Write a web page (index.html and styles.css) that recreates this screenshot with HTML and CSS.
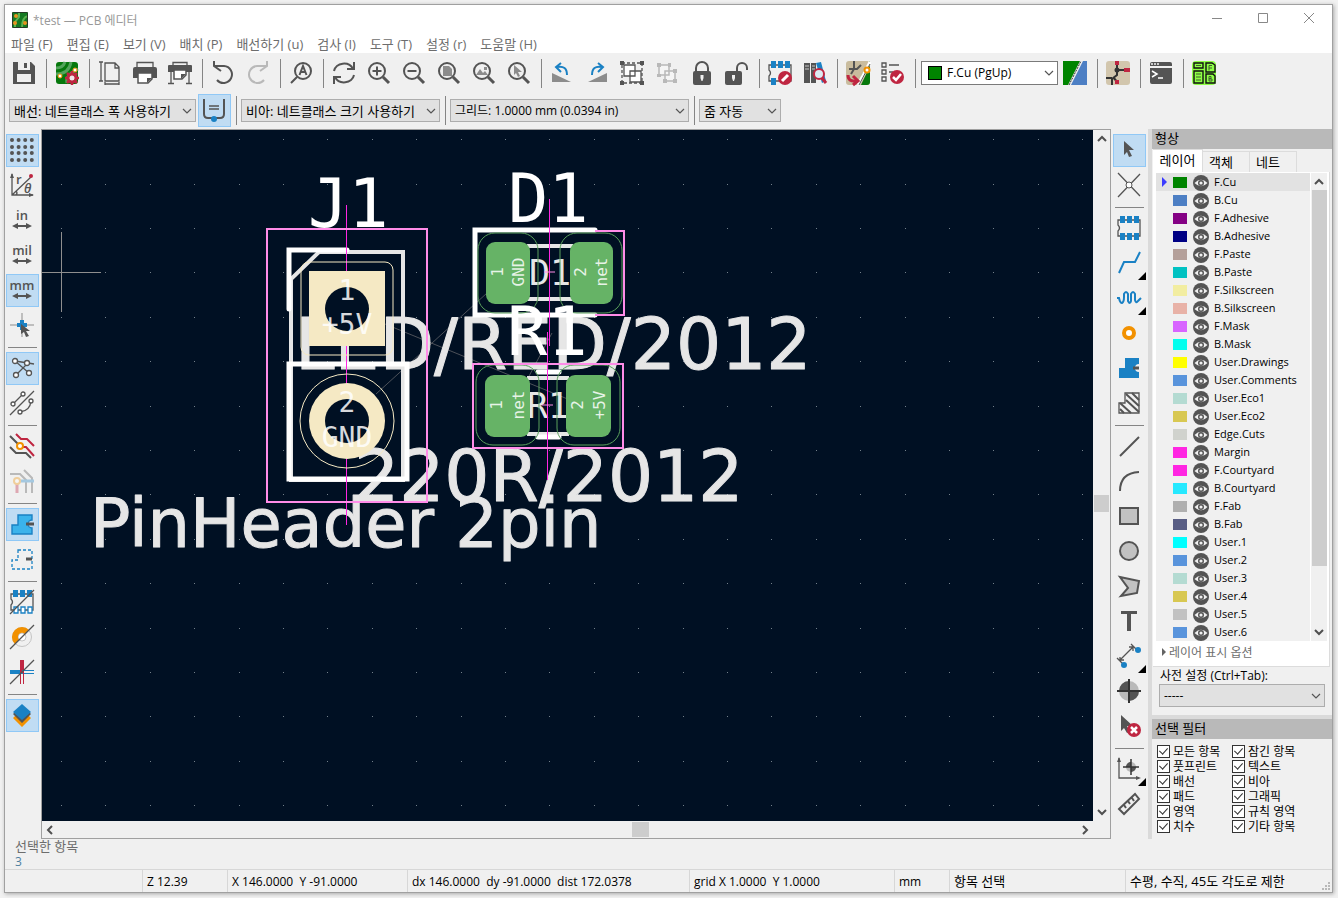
FILE: index.html
```html
<!DOCTYPE html>
<html lang="ko">
<head>
  <meta charset="UTF-8">
  <meta name="viewport" content="width=device-width, initial-scale=1.0">
  <title>*test — PCB 에디터</title>
  <link rel="stylesheet" href="styles.css">
</head>
<body>
  <!-- shared symbols -->
  <svg class="defs" aria-hidden="true">
    <symbol id="chevron" viewBox="0 0 10 6"><path d="M1 1l4 4 4-4" fill="none" stroke="#555" stroke-width="1.2"/></symbol>
    <symbol id="arrow" viewBox="0 0 10 8"><path d="M1 6l4-4 4 4" fill="none" stroke="#505050" stroke-width="2"/></symbol>
    <symbol id="eye" viewBox="0 0 16 16">
      <circle cx="8" cy="8" r="8" fill="#545454"/>
      <path d="M1.500 8Q8 1.500 14.500 8Q8 14.500 1.500 8z" fill="#f0f0f0"/>
      <circle cx="8" cy="8" r="2.300" fill="#f0f0f0" stroke="#545454" stroke-width="1.400"/>
    </symbol>
    <symbol id="lens" viewBox="0 0 24 24"><circle cx="10" cy="10" r="8" fill="none" stroke="#545454" stroke-width="2"/><path d="M16 16l6 6" stroke="#545454" stroke-width="3"/></symbol>
    <symbol id="chip" viewBox="0 0 24 24">
      <path d="M1 4h22v16H1v-5q3-3 0-6z" fill="none" stroke="#545454" stroke-width="1.300"/>
    </symbol>
    <symbol id="measure" viewBox="0 0 24 24"><path d="M4 18h16" stroke="#545454" stroke-width="2"/><path d="M2 18l6-3v6zM22 18l-6-3v6z" fill="#545454"/></symbol>
  </svg>

  <div class="window">
    <header class="titlebar">
      <svg class="app-icon" viewBox="0 0 16 16"><rect width="16" height="16" rx="1" fill="#157a22"/><path d="M7 0v5l-4 5v6M16 4q-6 1-6 12" fill="none" stroke="#5db34f" stroke-width="2"/><circle cx="4" cy="4" r="2" fill="#e5941e"/><circle cx="3" cy="11" r="2" fill="#e5941e"/><circle cx="13" cy="11" r="2" fill="#e5941e"/><rect x=".5" y=".5" width="15" height="15" rx="1" fill="none" stroke="#253b25"/></svg>
      <h1>*test — PCB 에디터</h1>
      <div class="window-buttons">
        <button aria-label="최소화"><svg viewBox="0 0 12 12"><path d="M1 6.500h10"/></svg></button>
        <button aria-label="최대화"><svg viewBox="0 0 12 12"><path d="M1.500 1.500h9v9h-9z"/></svg></button>
        <button aria-label="닫기"><svg viewBox="0 0 12 12"><path d="M1 1l10 10M11 1L1 11"/></svg></button>
      </div>
    </header>

    <nav class="menubar">
      <a href="#">파일 (F)</a>
      <a href="#">편집 (E)</a>
      <a href="#">보기 (V)</a>
      <a href="#">배치 (P)</a>
      <a href="#">배선하기 (u)</a>
      <a href="#">검사 (I)</a>
      <a href="#">도구 (T)</a>
      <a href="#">설정 (r)</a>
      <a href="#">도움말 (H)</a>
    </nav>

    <div class="toolbar">
      <button class="tool" aria-label="저장"><svg viewBox="0 0 24 24"><path class="dark" d="M1 1h18l4 4v18H1z"/><path fill="#f0f0f0" d="M6 1h12v8H6zM5 13h14v8H5z"/><path class="dark" d="M12 2h3v5h-3z"/></svg></button>
      <span class="sep"></span>
      <button class="tool" aria-label="보드 설정"><svg viewBox="0 0 24 24"><rect x="1" y="1" width="22" height="22" rx="3" fill="#06780c"/><path d="M1 7q7 0 9-6M1 13q13 0 15-12M12 22q-2-8 11-14" fill="none" stroke="#53a35b" stroke-width="3"/><circle cx="20" cy="9" r="2" fill="#fff" stroke="#f29100"/><circle cx="5" cy="15" r="2" fill="#fff" stroke="#f29100"/><circle cx="17" cy="17" r="4" fill="#efe6e8" stroke="#bf2641" stroke-width="3"/><path d="M17 10v4M17 20v4M10 17h4M20 17h4M12 12l3 3M19 19l3 3M22 12l-3 3M12 22l3-3" stroke="#bf2641" stroke-width="2.500"/></svg></button>
      <span class="sep"></span>
      <button class="tool" aria-label="페이지 설정"><svg viewBox="0 0 24 24"><path d="M7 2h10l4 4v14H7zM17 2v5h4M3 1v19M1 1h4M1 20h4M7 23h14M7 21v3M21 21v3" class="line"/></svg></button>
      <button class="tool" aria-label="인쇄"><svg viewBox="0 0 24 24"><path class="line" d="M4 6V1.500h16V6"/><path class="dark" d="M2 6h20q2 0 2 2v9H0V8q0-2 2-2z"/><path fill="#fff" stroke="#545454" stroke-width="1.500" d="M5 12h14v6l-4 4H5z"/><path class="dark" d="M14 17h5l-5 5z"/></svg></button>
      <button class="tool" aria-label="플롯"><svg viewBox="0 0 24 24"><path class="line" d="M5 4V1.500h14V4M3 10v12M0 22.500h6M21 10v12M18 22.500h6"/><path class="dark" d="M1 4h22q1 0 1 1v6H0V5q0-1 1-1z"/><path fill="#fff" stroke="#545454" stroke-width="1.500" d="M6 9h12v5l-4 4H6z"/><path class="dark" d="M13 13h5l-5 5z"/></svg></button>
      <span class="sep"></span>
      <button class="tool" aria-label="실행 취소"><svg viewBox="0 0 24 24"><path class="bold" d="M3 5h10a8.500 8.500 0 1 1-7 14M10 10L3 5V0"/></svg></button>
      <button class="tool faded" aria-label="다시 실행"><svg viewBox="0 0 24 24"><path class="bold" d="M21 5H11a8.500 8.500 0 1 0 7 14M14 10l7-5V0"/></svg></button>
      <span class="sep"></span>
      <button class="tool" aria-label="찾기"><svg viewBox="0 0 24 24"><circle class="bold" cx="14" cy="10" r="8"/><path class="bold" d="M8 16l-6 6M10.500 14l3.500-9 3.500 9M12 11h4"/></svg></button>
      <span class="sep"></span>
      <button class="tool" aria-label="새로 고침"><svg viewBox="0 0 24 24"><path class="bold" d="M2 10a10 9 0 0 1 19-2M22 14a10 9 0 0 1-19 2M22 1v7h-7M2 23v-7h7"/></svg></button>
      <button class="tool" aria-label="확대"><svg viewBox="0 0 24 24"><use href="#lens"/><path class="bold" d="M5.500 10h9M10 5.500v9"/></svg></button>
      <button class="tool" aria-label="축소"><svg viewBox="0 0 24 24"><use href="#lens"/><path class="bold" d="M5.500 10h9"/></svg></button>
      <button class="tool" aria-label="페이지 맞춤"><svg viewBox="0 0 24 24"><use href="#lens"/><path fill="#8c8c8c" d="M6 5h6l3 3v7H6z"/></svg></button>
      <button class="tool" aria-label="객체 맞춤"><svg viewBox="0 0 24 24"><use href="#lens"/><path fill="#8c8c8c" d="M4 14l4-6 3 4 2-2 3 4zM12 6h3v3h-3z"/></svg></button>
      <button class="tool" aria-label="선택 확대"><svg viewBox="0 0 24 24"><use href="#lens"/><path fill="#8c8c8c" d="M7 4l8 7h-4l2 4-2 1-2-4-2 2z"/></svg></button>
      <span class="sep"></span>
      <button class="tool" aria-label="반시계 방향 회전"><svg viewBox="0 0 24 24"><path fill="#8c8c8c" d="M2 12l19 9H2z"/><path class="blue-line" d="M7 6q10-2 10 8M11 2L6 6l5 5"/></svg></button>
      <button class="tool" aria-label="시계 방향 회전"><svg viewBox="0 0 24 24"><path fill="#8c8c8c" d="M22 12L3 21h19z"/><path class="blue-line" d="M17 6q-10-2-10 8M13 2l5 4-5 5"/></svg></button>
      <button class="tool" aria-label="그룹"><svg viewBox="0 0 24 24"><path class="line" stroke-dasharray="3 2" d="M2 2h20v20H2z"/><path fill="#fff" stroke="#545454" stroke-width="1.300" d="M4 4h11v11H4zM10 10h11v11H10z"/><path class="dark" d="M0 0h4v4H0zM20 0h4v4h-4zM0 20h4v4H0zM20 20h4v4h-4z"/></svg></button>
      <button class="tool faded" aria-label="그룹 해제"><svg viewBox="0 0 24 24"><path fill="#fff" stroke="#545454" stroke-width="1.500" d="M4 4h10v10H4zM10 10h10v10H10z"/><path class="dark" d="M2 2h4v4H2zM13 2h3v4h-3zM2 13h4v3H2zM18 8h4v4h-4zM8 18h4v4H8zM18 18h4v4h-4z"/></svg></button>
      <button class="tool" aria-label="잠금"><svg viewBox="0 0 24 24"><path class="bold" d="M6 11V7a6 6 0 0 1 12 0v4"/><rect class="dark" x="3" y="10" width="18" height="14" rx="2"/><path fill="#f0f0f0" d="M10.500 14h3v3l-1 3h-1l-1-3z"/></svg></button>
      <button class="tool" aria-label="잠금 해제"><svg viewBox="0 0 24 24"><path class="bold" d="M12 11V7a5 5 0 0 1 10 0v2"/><rect class="dark" x="0" y="10" width="17" height="14" rx="2"/><path fill="#f0f0f0" d="M7 14h3v3l-1 3H8l-1-3z"/></svg></button>
      <span class="sep"></span>
      <button class="tool" aria-label="풋프린트 편집기"><svg viewBox="0 0 24 24"><use href="#chip"/><path class="blue" d="M3 0h5v7H3zM10 0h5v7h-5zM17 0h5v7h-5zM3 17h5v7H3z"/><circle cx="17" cy="17" r="7" class="red"/><path stroke="#fff" stroke-width="3" d="M14 20l6-6"/></svg></button>
      <button class="tool" aria-label="풋프린트 라이브러리"><svg viewBox="0 0 24 24"><path class="dark" d="M1 2h6v20H1zM8 2h5v20H8z"/><path class="blue" d="M13 2l5-1 5 19-4 2z"/><path stroke="#c8c8c8" d="M2 5h4M2 8h4M9 5h3M9 8h3"/><circle cx="16" cy="13" r="5" fill="#dceaf2" stroke="#bf2641" stroke-width="2"/><path stroke="#bf2641" stroke-width="3" d="M19 17l4 5"/></svg></button>
      <span class="sep"></span>
      <button class="tool" aria-label="회로도에서 PCB 업데이트"><svg viewBox="0 0 24 24"><rect width="24" height="24" rx="3" fill="#c9bc9e"/><path fill="#06780c" d="M15 24L24 5v16q0 3-3 3zM15 15l9-15v10z"/><path d="M12 24L24 1" stroke="#fff" stroke-width="3"/><path d="M13 24L24 3" stroke="#545454"/><path class="bold" d="M8 0v8M3 8h8l4-4M8 8L5 13"/><circle cx="21" cy="9" r="2.500" fill="#fff" stroke="#f29100" stroke-width="2"/><path d="M2 14q0 7 8 6M7 15l5 5-5 4" stroke="#bf2641" stroke-width="3" fill="none"/></svg></button>
      <button class="tool" aria-label="디자인 규칙 검사"><svg viewBox="0 0 24 24"><path class="line" d="M1 2h4v4H1zM1 9h4v4H1zM1 16h4v4H1zM8 4h10M8 11h4"/><circle class="red" cx="16" cy="16" r="7"/><path fill="none" stroke="#fff" stroke-width="2.500" d="M12 16l3 3 5-6"/></svg></button>
      <span class="sep"></span>
      <label class="combo combo-layer">
        <span class="combo-swatch"></span>
        <select aria-label="활성 레이어"><option>F.Cu (PgUp)</option></select>
        <svg><use href="#chevron"/></svg>
      </label>
      <button class="tool" aria-label="레이어 쌍"><svg viewBox="0 0 24 24"><path fill="#008400" d="M0 0h17L5 24H0z"/><path fill="#4d7fc4" d="M20 0h4v24H8z"/><path d="M6 24L18 0" stroke="#333" stroke-dasharray="2 1"/></svg></button>
      <span class="sep"></span>
      <button class="tool" aria-label="회로도 편집기"><svg viewBox="0 0 24 24"><rect width="24" height="24" rx="3" fill="#d2c6ad"/><path d="M11 4v10L6 18v6M11 9h8M0 17h6M7 16l5 6" stroke="#333" stroke-width="2" fill="none"/><circle cx="11" cy="9" r="2.500" fill="#333"/><path class="red" d="M9 0h4v4H9zM18 7h6v4h-6zM9 19h4v4H9z"/></svg></button>
      <span class="sep"></span>
      <button class="tool" aria-label="스크립트 콘솔"><svg viewBox="0 0 24 24"><path class="dark" d="M1 3q0-2 2-2h18q2 0 2 2v2H1zM1 7h22v14q0 2-2 2H3q-2 0-2-2z"/><path d="M2 3h8" stroke="#f0f0f0" stroke-width="1.500" stroke-dasharray="2 1"/><path d="M3 10l5 3-5 3M9 17h5" fill="none" stroke="#fff" stroke-width="1.500"/></svg></button>
      <span class="sep"></span>
      <button class="tool" aria-label="보드 통계"><svg viewBox="0 0 24 24"><rect width="24" height="24" rx="4" fill="#8eff45"/><path d="M2 2h9v5H2zM2 10h9v12H2zM14 2h6l3 2v7h-9zM14 13h7l2 2v7h-9z" fill="none" stroke="#111" stroke-width="1.400"/><path d="M4 4.500h5M4 13h5M4 16h5M4 19h5M17 9.500V4.500h3M17 7h3M17 15.500v4.500M17 15.500h2v2h-2M17 20h3v-2h-3" fill="none" stroke="#3f5f30"/></svg></button>
    </div>

    <div class="toolbar toolbar-options">
      <label class="combo combo-track"><select aria-label="배선 폭"><option>배선: 네트클래스 폭 사용하기</option></select><svg><use href="#chevron"/></svg></label>
      <button class="tool active" aria-label="자동 배선 폭"><svg viewBox="0 0 24 24"><path class="bold" d="M2 1v15q0 4 4 4h12q4 0 4-4V1"/><path class="line" d="M7 8h10M7 11h10"/><circle class="blue" cx="12" cy="21" r="3"/></svg></button>
      <span class="sep"></span>
      <label class="combo combo-via"><select aria-label="비아 크기"><option>비아: 네트클래스 크기 사용하기</option></select><svg><use href="#chevron"/></svg></label>
      <span class="sep"></span>
      <label class="combo combo-grid"><select aria-label="그리드"><option>그리드: 1.0000 mm (0.0394 in)</option></select><svg><use href="#chevron"/></svg></label>
      <span class="sep"></span>
      <label class="combo combo-zoom"><select aria-label="줌"><option>줌 자동</option></select><svg><use href="#chevron"/></svg></label>
    </div>

    <main class="workspace">
      <div class="side-tools">
        <button class="tool active" aria-label="그리드 표시"><svg viewBox="0 0 24 24"><path d="M2 2h20M2 9h20M2 15h20M2 22h20" stroke="#545454" stroke-width="4" stroke-linecap="round" stroke-dasharray="0 6.600"/></svg></button>
        <button class="tool" aria-label="극좌표"><svg viewBox="0 0 24 24"><path class="line" d="M2 1v21h21M2 22L21 4M6 22q2-2 0-4"/><path class="dark" d="M0 5l2-5 2 5zM19 20l5 2-5 2z"/><circle class="red" cx="21" cy="3" r="2"/><text x="6" y="11">r</text><text class="theta" x="14" y="20">θ</text></svg></button>
        <button class="tool" aria-label="인치"><svg viewBox="0 0 24 24"><use href="#measure"/><text x="12" y="12" text-anchor="middle">in</text></svg></button>
        <button class="tool" aria-label="밀"><svg viewBox="0 0 24 24"><use href="#measure"/><text x="12" y="12" text-anchor="middle">mil</text></svg></button>
        <button class="tool active" aria-label="밀리미터"><svg viewBox="0 0 24 24"><use href="#measure"/><text x="12" y="12" text-anchor="middle">mm</text></svg></button>
        <button class="tool" aria-label="전체 십자선"><svg viewBox="0 0 24 24"><path stroke="#8c8c8c" d="M0 12h24M12 0v24"/><path d="M7 12h10M12 7v10" stroke="#1a81c4" stroke-width="4"/><path class="dark" d="M11 11l9 7h-4l3 5-3 1-2-5-3 2z"/></svg></button>
        <span class="sep"></span>
        <button class="tool active" aria-label="랫츠네스트"><svg viewBox="0 0 24 24"><path class="line" d="M5 5l13 2 6 1M5 5l14 12M18 7L6 19"/><g fill="#fff" stroke="#545454" stroke-width="1.300"><circle cx="5" cy="5" r="2.500"/><circle cx="17" cy="7" r="2.500"/><circle cx="19" cy="17" r="2.500"/><circle cx="6" cy="19" r="2.500"/></g></svg></button>
        <button class="tool" aria-label="곡선 랫츠네스트"><svg viewBox="0 0 24 24"><path class="line" d="M0 24L24 0M3 13L13 3M10 21q10-1 11-11"/><g fill="#fff" stroke="#545454" stroke-width="1.300"><circle cx="3" cy="13" r="2"/><circle cx="13" cy="3" r="2"/><circle cx="10" cy="21" r="2"/><circle cx="21" cy="10" r="2"/></g></svg></button>
        <span class="sep"></span>
        <button class="tool" aria-label="고대비 표시"><svg viewBox="0 0 24 24"><path class="bold" d="M0 2l9 9M0 13l6 6h10l5 5"/><path d="M6 0l5 5h6l7 7M12 13h4l8 9" fill="none" stroke="#bf2641" stroke-width="2"/><circle cx="10" cy="12" r="3" fill="#fff" stroke="#f29100" stroke-width="2"/></svg></button>
        <button class="tool faded" aria-label="네트 강조"><svg viewBox="0 0 24 24"><path class="bold" d="M0 5h10l6 6v13M14 1l8 8v15"/><path d="M7 12h17" stroke="#1a81c4" stroke-width="3"/><path d="M7 13v11" stroke="#bf2641" stroke-width="3"/><circle cx="7" cy="12" r="3" fill="#fff" stroke="#f29100" stroke-width="2"/></svg></button>
        <span class="sep"></span>
        <button class="tool active" aria-label="영역 채우기"><svg viewBox="0 0 24 24"><path d="M8 3h14v5a4 4 0 1 0 0 8v6H2V13h6z" fill="#3bb3eb" stroke="#1a81c4" stroke-width="1.400"/><path d="M16 12h8" stroke="#545454" stroke-width="3"/></svg></button>
        <button class="tool" aria-label="영역 외곽선"><svg viewBox="0 0 24 24"><path d="M8 3h14v19H2V13h6z" fill="none" stroke="#1a81c4" stroke-width="1.300" stroke-dasharray="3 2"/><path d="M16 12h6" stroke="#545454" stroke-width="3"/></svg></button>
        <span class="sep"></span>
        <button class="tool" aria-label="패드 외곽선"><svg viewBox="0 0 24 24"><use href="#chip"/><path class="blue" d="M3 0h5v7H3zM10 0h5v7h-5zM17 0h5v7h-5z"/><path fill="#fff" stroke="#1a81c4" stroke-width="1.300" d="M4 17h4v6H4zM11 17h4v6h-4zM18 17h4v6h-4z"/><path class="line" d="M0 24L24 0"/></svg></button>
        <button class="tool" aria-label="비아 외곽선"><svg viewBox="0 0 24 24"><circle cx="12" cy="12" r="9.500" fill="none" stroke="#c4c4c4"/><circle cx="12" cy="12" r="4" fill="#fff" stroke="#c4c4c4"/><path d="M7 17A7 7 0 0 1 17 7" fill="none" stroke="#f29100" stroke-width="6"/><path class="line" d="M0 24L24 0"/></svg></button>
        <button class="tool" aria-label="배선 외곽선"><svg viewBox="0 0 24 24"><path stroke="#1a81c4" stroke-width="4" d="M0 12h12"/><path stroke="#bf2641" stroke-width="4" d="M12 0v13"/><path stroke="#1a81c4" d="M12 10.500h12M12 13.500h12"/><path stroke="#bf2641" d="M10.500 12v12M13.500 12v12"/><path class="line" d="M0 24L24 0"/></svg></button>
        <span class="sep"></span>
        <button class="tool active" aria-label="형상 관리자"><svg viewBox="0 0 24 24"><path fill="#f29100" d="M12 24l-9-9 3-3 6 5 6-5 3 3z"/><path class="dark" d="M12 20l-9-9 3-3 6 5 6-5 3 3z"/><path class="blue" d="M12 1l9 8-9 8-9-8z"/></svg></button>
      </div>

      <div class="canvas-frame">
        <svg class="board" role="img" aria-label="PCB 보드">
          <defs>
            <g id="dot-row"><rect width="1" height="1"/><rect x="44" width="1" height="1"/><rect x="89" width="1" height="1"/><rect x="133" width="1" height="1"/><rect x="178" width="1" height="1"/></g>
            <pattern id="grid" x="19" y="9" width="222" height="222" patternUnits="userSpaceOnUse" fill="#73808a">
              <use href="#dot-row"/><use href="#dot-row" y="45"/><use href="#dot-row" y="89"/><use href="#dot-row" y="133"/><use href="#dot-row" y="178"/>
            </pattern>
          </defs>
          <rect width="100%" height="100%" fill="url(#grid)"/>
          <g transform="translate(-42 -130)">
            <g class="cursor">
              <rect x="42" y="272" width="59" height="1"/>
              <rect x="61" y="232" width="1" height="80"/>
            </g>
            <path class="ratsnest" d="M385 324L570 400M487 293L376 394M552 333L528 378"/>

            <text class="value" x="295" y="369">LED/RED/2012</text>
            <text class="value" x="354" y="501">220R/2012</text>
            <text class="value value-pin" x="90" y="547">PinHeader 2pin</text>

            <!-- fabrication layer -->
            <path class="fab" d="M319 252h84v228H291V279zM527 246h46M527 299h46M527 378h42M527 434h42"/>
            <text class="fab-ref" x="529" y="285">D1</text>
            <text class="fab-ref" x="527" y="418">R1</text>

            <!-- silkscreen -->
            <path class="silk" d="M347 250h-58v59M289 364h118v115H289zM595 230H475v85h120M538 372h21M538 437h21"/>

            <g class="axis">
              <rect x="346" y="205" width="1" height="320"/>
              <rect x="549" y="199" width="1" height="147"/>
              <rect x="547" y="332" width="1" height="148"/>
            </g>

            <!-- J1 pads -->
            <rect class="pad-tht" x="309" y="271" width="76" height="75"/>
            <circle class="pad-tht" cx="347" cy="421" r="38"/>
            <circle class="hole" cx="347" cy="309" r="22"/>
            <circle class="hole" cx="347" cy="421" r="22"/>
            <rect class="clear-tht" x="301" y="262" width="92" height="93" rx="8"/>
            <circle class="clear-tht" cx="347" cy="421" r="47"/>

            <!-- D1 and R1 pads -->
            <g class="pad-smd">
              <rect x="486" y="242" width="44" height="62" rx="9"/>
              <rect x="570" y="242" width="43" height="62" rx="9"/>
              <rect x="485" y="375" width="45" height="62" rx="9"/>
              <rect x="566" y="375" width="45" height="62" rx="9"/>
            </g>
            <g class="clear-smd">
              <rect x="478" y="233" width="60" height="80" rx="17"/>
              <rect x="560" y="233" width="62" height="80" rx="17"/>
              <rect x="476" y="365" width="63" height="80" rx="17"/>
              <rect x="557" y="365" width="63" height="80" rx="17"/>
            </g>

            <path class="courtyard" d="M267 229h160v273H267zM595 231h29v84h-29M473 364h150v84H473z"/>
            <path class="anchor" d="M544 272h11M542 405h11"/>

            <text class="ref" x="308" y="227">J1</text>
            <text class="ref" x="508" y="222">D1</text>
            <text class="ref" x="507" y="355">R1</text>

            <g class="pad-label">
              <text x="347" y="300">1</text>
              <text x="347" y="334">+5V</text>
              <text x="347" y="412">2</text>
              <text x="347" y="447">GND</text>
            </g>
            <g class="pad-label pad-label-small">
              <text transform="translate(503 272) rotate(-90)">1</text>
              <text transform="translate(524 272) rotate(-90)">GND</text>
              <text transform="translate(586 272) rotate(-90)">2</text>
              <text transform="translate(607 272) rotate(-90)">net</text>
              <text transform="translate(502 405) rotate(-90)">1</text>
              <text transform="translate(524 405) rotate(-90)">net</text>
              <text transform="translate(583 405) rotate(-90)">2</text>
              <text transform="translate(605 405) rotate(-90)">+5V</text>
            </g>
          </g>
        </svg>
        <div class="vscroll"><svg><use href="#arrow"/></svg><span class="thumb"></span><svg class="down"><use href="#arrow"/></svg></div>
        <div class="hscroll"><svg class="left"><use href="#arrow"/></svg><span class="thumb"></span><svg class="right"><use href="#arrow"/></svg></div>
      </div>

      <div class="side-tools side-tools-right">
        <button class="tool active" aria-label="선택"><svg viewBox="0 0 24 24"><path class="dark" d="M7 3l10 9h-5l3 6-3 1-2-5-3 3z"/></svg></button>
        <button class="tool" aria-label="로컬 랫츠네스트"><svg viewBox="0 0 24 24"><path class="line" d="M1 0l22 23M23 1L1 24"/><circle cx="12" cy="12" r="3" fill="#fff" stroke="#545454"/></svg></button>
        <span class="sep"></span>
        <button class="tool" aria-label="풋프린트 추가"><svg viewBox="0 0 24 24"><use href="#chip"/><path class="blue" d="M3 0h5v7H3zM10 0h5v7h-5zM17 0h5v7h-5zM3 17h5v7H3zM10 17h5v7h-5zM17 17h5v7h-5z"/></svg></button>
        <button class="tool more" aria-label="배선"><svg viewBox="0 0 24 24"><path class="blue-line" d="M2 22l5-11h11l5-10"/></svg></button>
        <button class="tool more" aria-label="길이 조정"><svg viewBox="0 0 24 24"><path class="blue-line" d="M0 12h2q1 5 3 5 2-1 2-6V8q2-4 4 0v7q2 4 3 0V8q2-4 4 0v6q1 4 3 1l3-3"/></svg></button>
        <button class="tool" aria-label="비아"><svg viewBox="0 0 24 24"><circle cx="12" cy="12" r="5" fill="#fff" stroke="#f29100" stroke-width="4"/></svg></button>
        <button class="tool" aria-label="채움 영역"><svg viewBox="0 0 24 24"><path class="blue" d="M8 2h14v6a4 4 0 1 0 0 8v6H2V12h6z"/><path d="M16 12h6" stroke="#545454" stroke-width="3"/></svg></button>
        <button class="tool" aria-label="규칙 영역"><svg viewBox="0 0 24 24"><path class="line" d="M8 2h14v20H2V12h6z"/><path d="M9 3l13 12M9 9l13 12M3 12l11 10M3 18l4 4M15 2l7 7" stroke="#545454" stroke-width="2"/></svg></button>
        <span class="sep"></span>
        <button class="tool" aria-label="선"><svg viewBox="0 0 24 24"><path class="bold" d="M3 22L22 3"/></svg></button>
        <button class="tool" aria-label="호"><svg viewBox="0 0 24 24"><path class="bold" d="M3 22Q3 4 22 3"/></svg></button>
        <button class="tool" aria-label="사각형"><svg viewBox="0 0 24 24"><path class="shape" d="M3 4h18v16H3z"/></svg></button>
        <button class="tool" aria-label="원"><svg viewBox="0 0 24 24"><circle class="shape" cx="12" cy="12" r="9"/></svg></button>
        <button class="tool" aria-label="다각형"><svg viewBox="0 0 24 24"><path class="shape" d="M3 3l19 4-2 12-16 3 7-8z"/></svg></button>
        <button class="tool" aria-label="텍스트"><svg viewBox="0 0 24 24"><path class="dark" d="M4 2h16v3h-6v17h-4V5H4z"/></svg></button>
        <button class="tool more" aria-label="치수"><svg viewBox="0 0 24 24"><path class="line" d="M3 16L16 3M3 13v3h4M12 3h4v4M0 14l7 7M14 0l7 7"/><circle class="blue" cx="21" cy="6" r="3"/><circle class="blue" cx="7" cy="21" r="3"/></svg></button>
        <button class="tool" aria-label="층 정렬 표적"><svg viewBox="0 0 24 24"><circle cx="12" cy="12" r="10" fill="#b9b9b9"/><path class="dark" d="M12 12V2A10 10 0 0 0 2 12zM12 12v10a10 10 0 0 0 10-10z"/><path d="M0 12h24M12 0v24" stroke="#333" stroke-width="2"/></svg></button>
        <button class="tool" aria-label="삭제"><svg viewBox="0 0 24 24"><path class="dark" d="M4 1l12 11h-6l3 6-3 1-3-5-3 3z"/><circle class="red" cx="17" cy="16" r="7"/><path d="M14 13l6 6M20 13l-6 6" stroke="#fff" stroke-width="2.500"/></svg></button>
        <span class="sep"></span>
        <button class="tool more" aria-label="원점 설정"><svg viewBox="0 0 24 24"><path class="line" d="M2 1v20h20"/><path class="dark" d="M0 5l2-5 2 5zM19 19l5 2-5 2z"/><circle cx="14" cy="10" r="5" fill="#b9b9b9"/><path class="dark" d="M14 10V5a5 5 0 0 0-5 5zM14 10v5a5 5 0 0 0 5-5z"/><path d="M6 10h16M14 2v16" stroke="#333" stroke-width="1.500"/></svg></button>
        <button class="tool" aria-label="측정"><svg viewBox="0 0 24 24"><path class="bold" d="M2 17L18 2l4 5L7 22zM7 13l2 3M11 9l2 3M15 6l2 3"/></svg></button>
      </div>

      <aside class="panels">
        <section class="panel appearance">
          <h2>형상</h2>
          <div class="tabs">
            <button class="tab selected">레이어</button>
            <button class="tab">객체</button>
            <button class="tab">네트</button>
          </div>
          <div class="tab-page">
            <div class="layer-box">
              <ul id="layer-list" class="layer-list"></ul>
              <div class="vscroll layer-scroll"><svg><use href="#arrow"/></svg><span class="thumb"></span><svg class="down"><use href="#arrow"/></svg></div>
            </div>
            <button class="layer-options"><svg viewBox="0 0 4 8"><path d="M0 0l4 4-4 4z" fill="#646464"/></svg>레이어 표시 옵션</button>
          </div>
          <div class="presets">
            <label for="preset">사전 설정 (Ctrl+Tab):</label>
            <div class="combo"><select id="preset"><option>-----</option></select><svg><use href="#chevron"/></svg></div>
          </div>
        </section>

        <section class="panel filter">
          <h2>선택 필터</h2>
          <div class="filter-grid">
            <label><input type="checkbox" checked>모든 항목</label>
            <label><input type="checkbox" checked>잠긴 항목</label>
            <label><input type="checkbox" checked>풋프린트</label>
            <label><input type="checkbox" checked>텍스트</label>
            <label><input type="checkbox" checked>배선</label>
            <label><input type="checkbox" checked>비아</label>
            <label><input type="checkbox" checked>패드</label>
            <label><input type="checkbox" checked>그래픽</label>
            <label><input type="checkbox" checked>영역</label>
            <label><input type="checkbox" checked>규칙 영역</label>
            <label><input type="checkbox" checked>치수</label>
            <label><input type="checkbox" checked>기타 항목</label>
          </div>
        </section>
      </aside>
    </main>

    <div class="message-panel">
      <span>선택한 항목</span>
      <span class="message-value">3</span>
    </div>

    <footer class="statusbar">
      <span class="st-blank"></span>
      <span class="st-zoom">Z 12.39</span>
      <span class="st-pos">X 146.0000&nbsp; Y -91.0000</span>
      <span class="st-delta">dx 146.0000&nbsp; dy -91.0000&nbsp; dist 172.0378</span>
      <span class="st-grid">grid X 1.0000&nbsp; Y 1.0000</span>
      <span class="st-unit">mm</span>
      <span class="st-mode">항목 선택</span>
      <span class="st-angle">수평, 수직, 45도 각도로 제한</span>
      <svg class="grip" viewBox="0 0 9 9"><path d="M6 0h2v2H6zM3 3h2v2H3zM6 3h2v2H6zM0 6h2v2H0zM3 6h2v2H3zM6 6h2v2H6z" fill="#b8b8b8"/></svg>
    </footer>
  </div>

  <script>
    const layers = [
      ['F.Cu', '#008400'],
      ['B.Cu', '#4d7fc4'],
      ['F.Adhesive', '#840084'],
      ['B.Adhesive', '#000084'],
      ['F.Paste', '#b4a09a'],
      ['B.Paste', '#00c2c2'],
      ['F.Silkscreen', '#f2eda1'],
      ['B.Silkscreen', '#e8b2a7'],
      ['F.Mask', '#d864ff'],
      ['B.Mask', '#02ffee'],
      ['User.Drawings', '#ffff00'],
      ['User.Comments', '#5994dc'],
      ['User.Eco1', '#b4dbd2'],
      ['User.Eco2', '#d8c852'],
      ['Edge.Cuts', '#d0d2cd'],
      ['Margin', '#ff26e2'],
      ['F.Courtyard', '#ff26e2'],
      ['B.Courtyard', '#26e9ff'],
      ['F.Fab', '#afafaf'],
      ['B.Fab', '#585d84'],
      ['User.1', '#00ffff'],
      ['User.2', '#5994dc'],
      ['User.3', '#b4dbd2'],
      ['User.4', '#d8c852'],
      ['User.5', '#c2c2c2'],
      ['User.6', '#5994dc']
    ];

    document.getElementById('layer-list').innerHTML = layers.map(([name, color]) => `
      <li>
        <span class="swatch" style="background: ${color}"></span>
        <svg class="eye"><use href="#eye"/></svg>
        <span>${name}</span>
      </li>`).join('');
  </script>
</body>
</html>
```

FILE: styles.css
```css
* {
  box-sizing: border-box;
}

body {
  margin: 0;
  height: 100vh;
  display: flex;
  padding: 4px 5px 5px 4px;
  background: #f1f1f1;
  font-family: "Open Sans", "Noto Sans CJK KR", sans-serif;
  font-size: 12px;
  color: #000;
}

button,
select,
input {
  font: inherit;
  color: inherit;
}

button {
  background: none;
  border: none;
  padding: 0;
}

.defs {
  position: absolute;
  width: 0;
  height: 0;
}

.window {
  flex: 1;
  min-width: 0;
  display: flex;
  flex-direction: column;
  background: #f0f0f0;
  border: 1px solid #a0a0a0;
  box-shadow: 1px 1px 4px rgba(0, 0, 0, 0.3);
}

/* title and menu */
.titlebar {
  display: flex;
  align-items: center;
  height: 29px;
  padding-left: 7px;
  background: #fff;
}

.app-icon {
  width: 16px;
  height: 16px;
}

.titlebar h1 {
  margin: 0 0 0 5px;
  flex: 1;
  font-size: 12px;
  font-weight: normal;
  color: #999;
}

.window-buttons button {
  width: 46px;
  height: 29px;
}

.window-buttons {
  display: flex;
}

.window-buttons svg {
  width: 12px;
  height: 12px;
  fill: none;
  stroke: #888;
}

.menubar {
  display: flex;
  gap: 14px;
  height: 19px;
  padding-left: 6px;
  background: #fff;
  font-size: 13px;
  line-height: 20px;
}

.menubar a {
  color: #6d6d6d;
  text-decoration: none;
  white-space: nowrap;
}

/* toolbars */
.toolbar {
  display: flex;
  align-items: center;
  height: 40px;
  padding-left: 2px;
}

.toolbar-options {
  height: 35px;
  margin-bottom: 1px;
  padding-left: 3px;
}

.tool {
  position: relative;
  flex: none;
  display: flex;
  align-items: center;
  justify-content: center;
  width: 33px;
  height: 33px;
  margin: 1px;
  padding: 0 1px 1px 0;
  border: 1px solid transparent;
}

.tool.active {
  background: #c0dcf3;
  border-color: #90c8f6;
}

.tool svg {
  width: 24px;
  height: 24px;
  overflow: visible;
}

.tool text {
  font-family: "Open Sans", sans-serif;
  font-size: 13px;
  font-weight: 600;
  fill: #545454;
}

.tool .theta {
  font-style: italic;
}

.faded svg {
  opacity: 0.35;
}

.more::after {
  content: "";
  position: absolute;
  right: -1px;
  bottom: -1px;
  border: 4px solid #000;
  border-top-color: transparent;
  border-left-color: transparent;
}

.sep {
  flex: none;
  width: 8px;
  height: 29px;
  background: linear-gradient(#858585, #858585) center / 1px 100% no-repeat;
}

.dark {
  fill: #545454;
}

.blue {
  fill: #1a81c4;
}

.red {
  fill: #bf2641;
}

.line {
  fill: none;
  stroke: #545454;
  stroke-width: 1.3;
}

.bold {
  fill: none;
  stroke: #545454;
  stroke-width: 2;
}

.blue-line {
  fill: none;
  stroke: #1a81c4;
  stroke-width: 2;
}

.shape {
  fill: #c2c2c2;
  stroke: #545454;
  stroke-width: 2;
}

/* drop-downs */
.combo {
  position: relative;
  display: block;
  flex: none;
  margin: 0 1px;
  font-size: 13px;
}

.combo select {
  appearance: none;
  display: block;
  width: 100%;
  height: 23px;
  padding: 0 20px 0 4px;
  border: 1px solid #adadad;
  border-radius: 0;
  background: #e1e1e1;
  line-height: 20px;
}

.combo svg {
  position: absolute;
  right: 4px;
  top: 9px;
  width: 10px;
  height: 6px;
  pointer-events: none;
}

.combo-track { width: 187px; }
.combo-via { width: 199px; }
.combo-grid { width: 239px; font-size: 12px; }
.combo-zoom { width: 82px; }

.combo-layer {
  width: 137px;
  margin: 0 0 0 2px;
  font-size: 12px;
}

.combo-layer select {
  height: 24px;
  padding-left: 25px;
  border-color: #7a7a7a;
  background: #fff;
}

.combo-swatch {
  position: absolute;
  left: 7px;
  top: 5px;
  width: 14px;
  height: 14px;
  border: 1px solid #000;
  background: #008400;
}

/* middle area */
.workspace {
  flex: 1;
  min-height: 0;
  display: flex;
}

.side-tools {
  flex: none;
  width: 36px;
  padding-top: 4px;
  display: flex;
  flex-direction: column;
}

.side-tools-right {
  width: 37px;
  padding-left: 1px;
}

.side-tools .sep {
  width: 29px;
  height: 8px;
  margin-left: 3px;
  background: linear-gradient(#858585, #858585) center / 100% 1px no-repeat;
}

.canvas-frame {
  flex: 1;
  min-width: 0;
  display: grid;
  grid-template-columns: 1fr 17px;
  grid-template-rows: 1fr 17px;
  border: 1px solid #a0a0a0;
}

.board {
  width: 100%;
  height: 100%;
  background: #001023;
}

.vscroll,
.hscroll {
  display: flex;
  align-items: center;
  justify-content: space-between;
  background: #f0f0f0;
}

.vscroll {
  flex-direction: column;
  padding: 5px 0;
}

.hscroll {
  padding: 0 3px;
}

.vscroll svg,
.hscroll svg {
  flex: none;
  width: 10px;
  height: 8px;
}

.vscroll .down { transform: rotate(180deg); }
.hscroll .left { transform: rotate(-90deg); }
.hscroll .right { transform: rotate(90deg); }

.thumb {
  background: #cdcdcd;
}

.vscroll .thumb {
  width: 15px;
  height: 17px;
  margin-top: 56px;
}

.hscroll .thumb {
  width: 17px;
  height: 15px;
  margin-left: 146px;
}

/* board drawing */
.cursor {
  fill: #8f8f8f;
}

.ratsnest {
  stroke: #4c5159;
  fill: none;
}

.value {
  font-family: "DejaVu Sans", sans-serif;
  font-size: 71px;
  fill: #e6e6e6;
  stroke: #e6e6e6;
  stroke-linejoin: round;
}

.value-pin {
  font-size: 67px;
}

.ref {
  font-family: "DejaVu Sans Mono", monospace;
  font-size: 67px;
  fill: #fff;
}

.fab {
  fill: none;
  stroke: #e6e6e6;
  stroke-width: 4;
}

.fab-ref {
  font-family: "DejaVu Sans Mono", monospace;
  font-size: 35px;
  fill: #e6e6e6;
}

.axis {
  fill: #ff26e2;
}

.silk {
  fill: none;
  stroke: #fff;
  stroke-width: 5;
  stroke-linecap: round;
}

.pad-tht { fill: #f5e9c4; }
.hole { fill: #001023; }
.pad-smd { fill: #66b366; }

.clear-tht {
  fill: none;
  stroke: #f5e9c4;
}

.clear-smd {
  fill: none;
  stroke: #5aa05c;
}

.courtyard {
  fill: none;
  stroke: #ff8ce8;
  stroke-width: 2;
}

.anchor {
  stroke: #ff8ce8;
}

.pad-label {
  font-family: "DejaVu Sans Mono", monospace;
  font-size: 28px;
  text-anchor: middle;
  fill: rgba(255, 255, 255, 0.85);
}

.pad-label-small {
  font-size: 16px;
}

/* right panels */
.panels {
  flex: none;
  width: 184px;
  display: flex;
  flex-direction: column;
  padding-left: 4px;
  background: #dadada;
}

.panel {
  background: #f0f0f0;
}

.panel h2 {
  margin: 0;
  height: 20px;
  padding-left: 3px;
  background: #b9b9b9;
  font-size: 13px;
  font-weight: normal;
  line-height: 19px;
}

.appearance {
  flex: 1;
  min-height: 0;
  display: flex;
  flex-direction: column;
  margin-bottom: 4px;
}

.tabs {
  display: flex;
  align-items: flex-end;
  height: 23px;
  padding-left: 1px;
  font-size: 13px;
}

.tab {
  width: 47px;
  height: 21px;
  padding: 0 14px 3px 4px;
  border: 1px solid #dcdcdc;
  border-width: 1px 1px 0 0;
}

.tab.selected {
  width: 50px;
  height: 23px;
  padding: 0 0 4px;
  background: #fff;
}

.tab-page {
  flex: 1;
  min-height: 0;
  display: flex;
  flex-direction: column;
  margin: 0 2px 0 1px;
  padding: 1px 2px 0 3px;
  border: 1px solid #dcdcdc;
  border-width: 0 1px 1px 0;
  background: #fff;
}

.layer-box {
  flex: 1;
  min-height: 0;
  display: flex;
  gap: 1px;
}

.layer-list {
  flex: 1;
  margin: 0;
  padding: 0;
  overflow: hidden;
  list-style: none;
  background: #f0f0f0;
  font-size: 11px;
}

.layer-list li {
  display: flex;
  align-items: center;
  height: 18px;
  padding-left: 17px;
  line-height: 18px;
}

.layer-list li:first-child {
  padding-left: 6px;
  background: #e2e2e2;
}

/* marks the active layer */
.layer-list li:first-child::before {
  content: "";
  width: 0;
  margin-right: 6px;
  border: 5px solid transparent;
  border-right: none;
  border-left-color: #3c3cff;
}

.swatch {
  width: 14px;
  height: 11px;
}

.eye {
  width: 16px;
  height: 16px;
  margin: 1px 5px 0 6px;
}

.vscroll.layer-scroll {
  width: 16px;
}

.layer-scroll .thumb {
  flex: 0 1 376px;
  margin: 4px 0 auto;
}

.layer-options {
  display: flex;
  align-items: center;
  gap: 3px;
  height: 25px;
  padding: 0 0 3px 6px;
  color: #6d6d6d;
}

.layer-options svg {
  width: 4px;
  height: 8px;
}

.presets {
  padding: 0 6px 8px;
  line-height: 17px;
}

.presets label {
  display: block;
  padding-left: 2px;
}

.presets .combo {
  font-size: 12px;
}

.filter-grid {
  display: grid;
  grid-template-columns: 75px 1fr;
  grid-auto-rows: 15px;
  padding: 5px;
  line-height: 15px;
}

.filter-grid label {
  display: flex;
  align-items: center;
  gap: 3px;
  white-space: nowrap;
}

.filter-grid input {
  appearance: none;
  position: relative;
  flex: none;
  width: 13px;
  height: 13px;
  margin: 0;
  border: 1px solid #333;
  background: #fff;
}

.filter-grid input:checked::after {
  content: "";
  position: absolute;
  left: 3px;
  top: 0;
  width: 4px;
  height: 7px;
  border: solid #333;
  border-width: 0 1px 1px 0;
  transform: rotate(42deg);
}

/* bottom */
.message-panel {
  display: flex;
  flex-direction: column;
  height: 30px;
  padding-left: 10px;
  color: #6d6d6d;
  font-size: 13px;
  line-height: 15px;
}

.message-value {
  color: #4d7f9f;
  font-size: 12px;
}

.statusbar {
  position: relative;
  display: flex;
  height: 23px;
  border-top: 1px solid #d7d7d7;
  line-height: 23px;
}

.statusbar span {
  flex: none;
  height: 22px;
  padding-left: 5px;
  border-right: 1px solid #d7d7d7;
  white-space: pre;
}

.statusbar .st-blank { width: 138px; }
.statusbar .st-zoom { width: 85px; padding-left: 4px; }
.statusbar .st-pos { width: 180px; padding-left: 4px; }
.statusbar .st-delta { width: 282px; padding-left: 4px; }
.statusbar .st-grid { width: 205px; padding-left: 4px; }
.statusbar .st-unit { width: 55px; padding-left: 4px; }
.statusbar .st-mode { flex: 1; padding-left: 4px; font-size: 13px; }
.statusbar .st-angle { width: 206px; padding-left: 4px; border: none; font-size: 13px; }

.grip {
  position: absolute;
  right: 1px;
  bottom: 1px;
  width: 9px;
  height: 9px;
}
```
